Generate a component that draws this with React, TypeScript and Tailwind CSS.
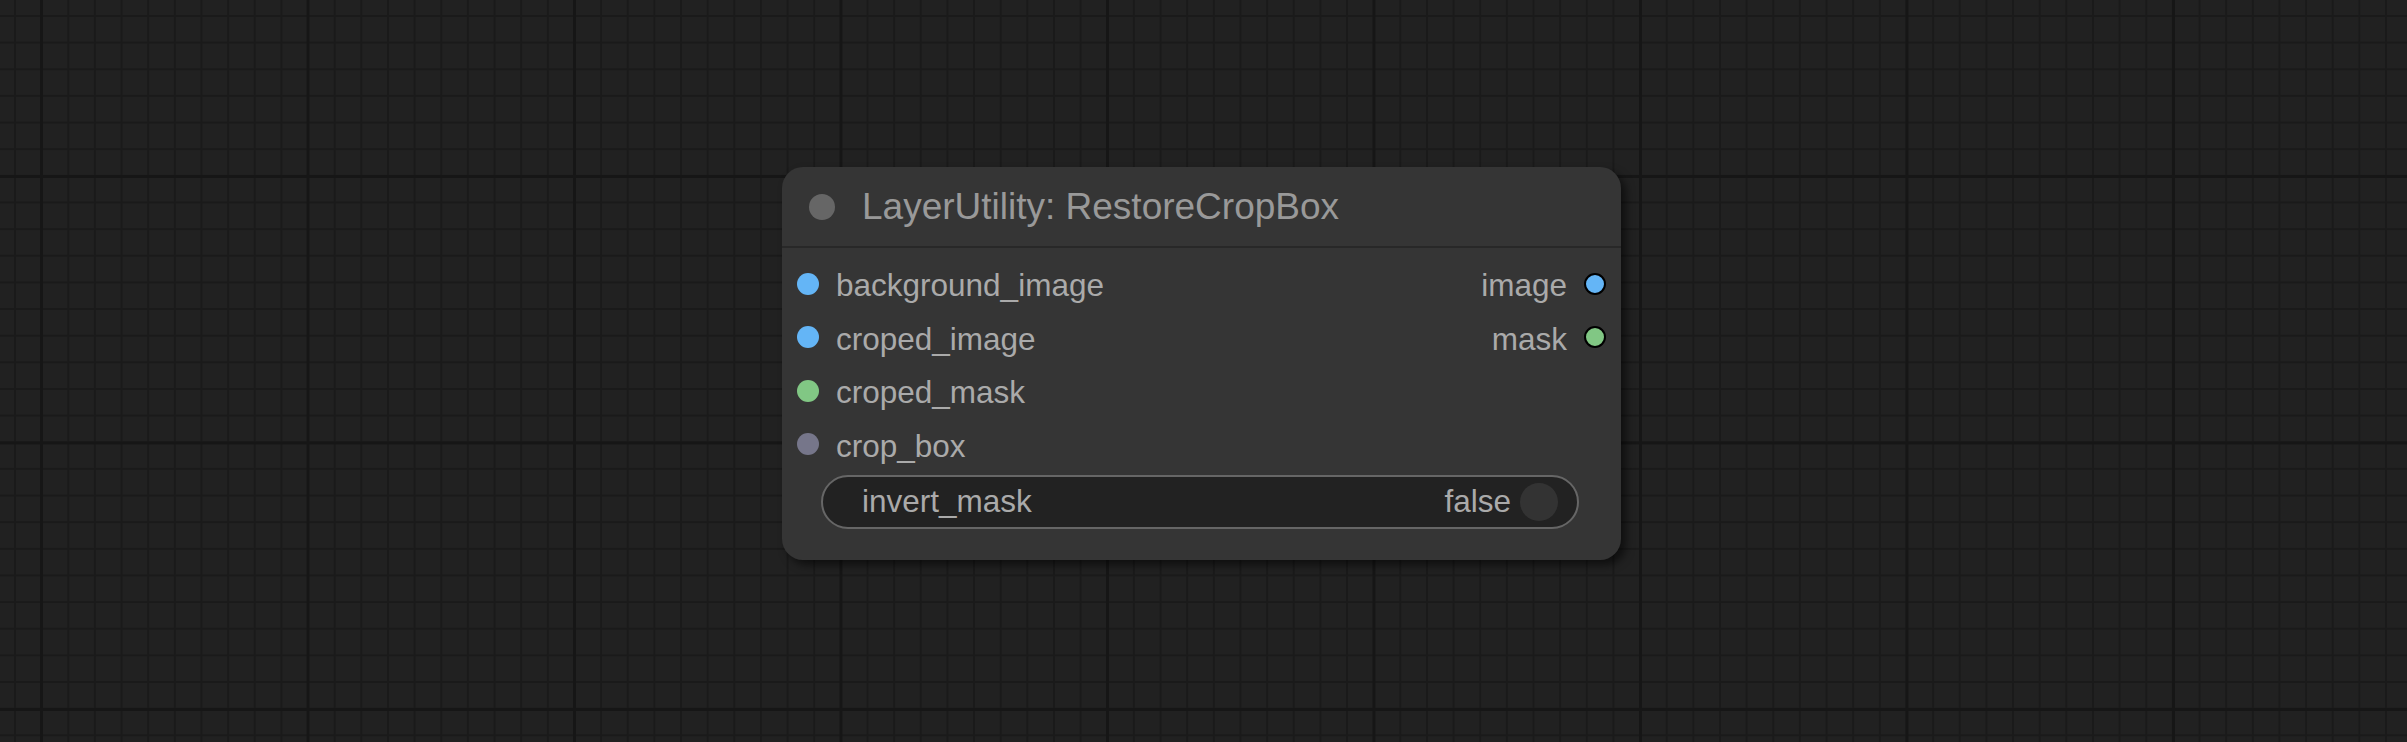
// ComfyUI-style canvas with a single LayerUtility node, drawn at ~2.63x zoom.

type Slot = { name: string; color: string };

const INPUTS: Slot[] = [
  { name: "background_image", color: "bg-[#64b5f6]" },
  { name: "croped_image", color: "bg-[#64b5f6]" },
  { name: "croped_mask", color: "bg-[#81c784]" },
  { name: "crop_box", color: "bg-[#76768a]" },
];

const OUTPUTS: Slot[] = [
  { name: "image", color: "bg-[#64b5f6]" },
  { name: "mask", color: "bg-[#81c784]" },
];

function Row({ input, output }: { input: Slot; output?: Slot }) {
  return (
    <div className="flex h-[53.5px] items-center justify-between">
      <div className="flex items-center gap-[17px] pl-[15px]">
        <span className={`h-[22px] w-[22px] rounded-full ${input.color}`} />
        <span className="pt-[4px] text-[31.5px] leading-none text-[#aaaaaa]">{input.name}</span>
      </div>
      {output && (
        <div className="flex items-center gap-[17px] pr-[15px]">
          <span className="pt-[4px] text-[31.5px] leading-none text-[#aaaaaa]">{output.name}</span>
          <span className={`h-[22px] w-[22px] rounded-full border-2 border-black ${output.color}`} />
        </div>
      )}
    </div>
  );
}

export default function App() {
  return (
    <div
      className="relative h-[742px] w-[2407px] overflow-hidden bg-[#212121] font-['Liberation_Sans',Arial,sans-serif]
        bg-[linear-gradient(to_right,#161616_3px,transparent_3px),linear-gradient(to_bottom,#161616_3px,transparent_3px),linear-gradient(to_right,#1a1a1a_2px,transparent_2px),linear-gradient(to_bottom,#1a1a1a_2px,transparent_2px)]
        bg-[size:266.5px_266.5px,266.5px_266.5px,26.65px_26.65px,26.65px_26.65px]
        bg-[position:40px_0,0_175px,14px_0,0_15px]"
    >
      {/* node */}
      <div className="absolute left-[782px] top-[167px] flex h-[393px] w-[839px] flex-col rounded-[21px] bg-[#353535] shadow-[5px_5px_8px_rgba(0,0,0,0.55)]">
        <div className="flex h-[81px] items-center gap-[27px] border-b-2 border-[#282828] pl-[27px]">
          <span className="h-[26px] w-[26px] rounded-full bg-[#666666]" />
          <span className="text-[37px] leading-none text-[#999999]">LayerUtility: RestoreCropBox</span>
        </div>

        <div className="flex flex-col pt-[9px]">
          {INPUTS.map((input, i) => (
            <Row key={input.name} input={input} output={OUTPUTS[i]} />
          ))}
        </div>

        <div className="ml-[39px] mr-[42px] mt-[4px] flex h-[54px] items-center justify-between rounded-full border-2 border-[#666666] bg-[#222222] pl-[39px] pr-[19px]">
          <span className="text-[31.5px] leading-none text-[#aaaaaa]">invert_mask</span>
          <div className="flex items-center gap-[9px]">
            <span className="text-[31.5px] leading-none text-[#aaaaaa]">false</span>
            <span className="h-[38px] w-[38px] rounded-full bg-[#333333]" />
          </div>
        </div>
      </div>
    </div>
  );
}
